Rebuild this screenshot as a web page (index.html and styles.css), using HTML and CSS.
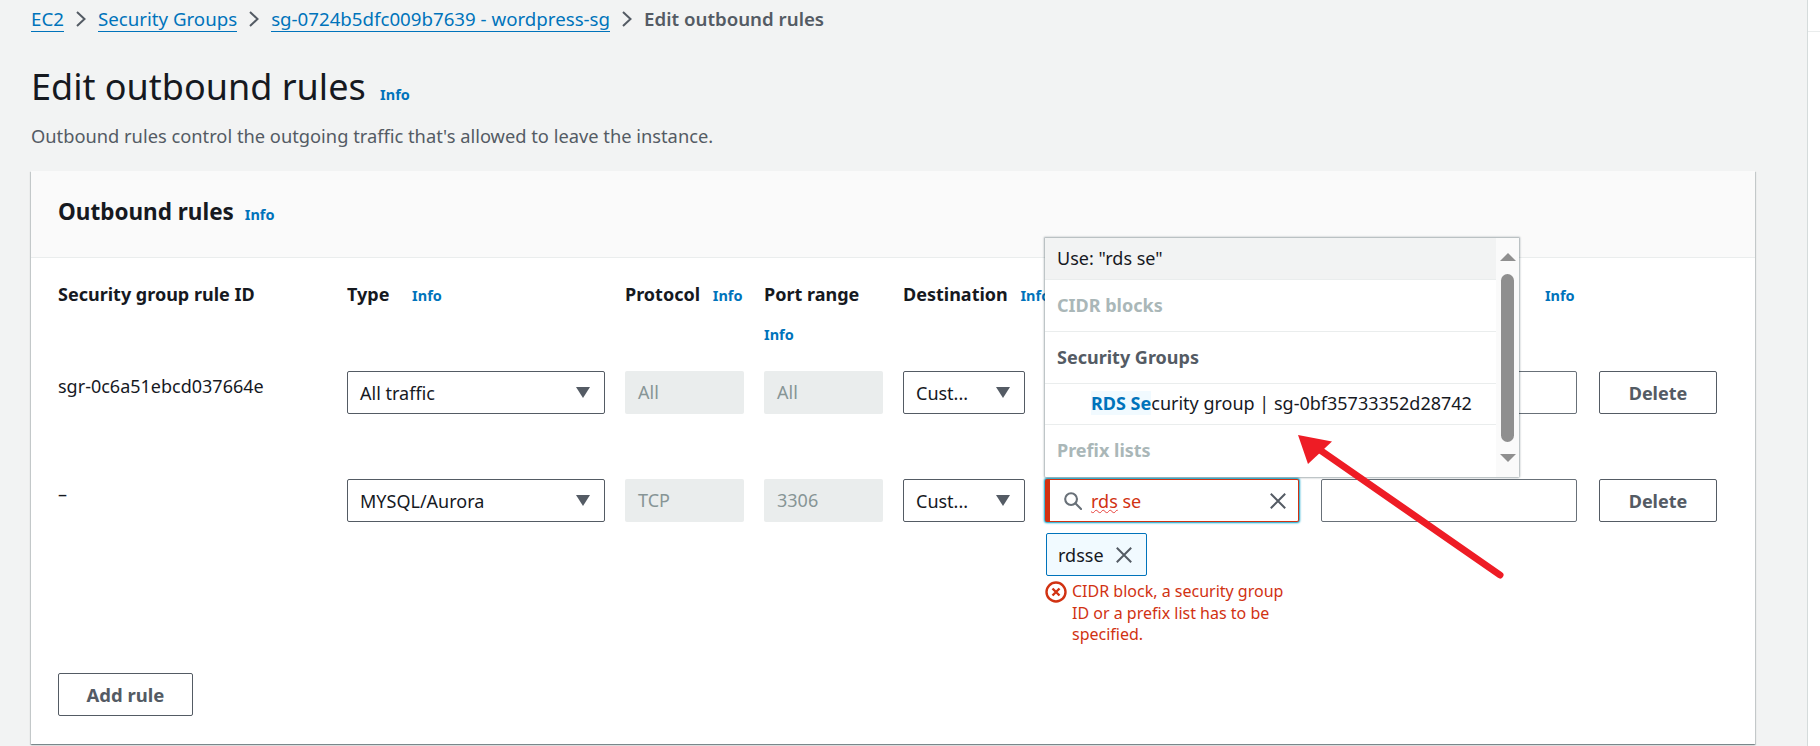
FILE: index.html
```html
<!DOCTYPE html>
<html lang="en">
<head>
<meta charset="utf-8">
<title>Edit outbound rules</title>
<link rel="stylesheet" href="styles.css">
</head>
<body>
<div class="shell">
  <main class="page">
    <nav class="crumbs">
      <a class="crumb-link" href="#">EC2</a>
      <svg class="crumb-sep" viewBox="0 0 16 16"><path d="M4 1l7.5 7L4 15" /></svg>
      <a class="crumb-link" href="#">Security Groups</a>
      <svg class="crumb-sep" viewBox="0 0 16 16"><path d="M4 1l7.5 7L4 15" /></svg>
      <a class="crumb-link" href="#">sg-0724b5dfc009b7639 - wordpress-sg</a>
      <svg class="crumb-sep" viewBox="0 0 16 16"><path d="M4 1l7.5 7L4 15" /></svg>
      <span class="crumb-current">Edit outbound rules</span>
    </nav>
    <header class="page-head">
      <h1 class="page-title">Edit outbound rules <a class="info info-title" href="#">Info</a></h1>
      <p class="page-desc">Outbound rules control the outgoing traffic that's allowed to leave the instance.</p>
    </header>
    <section class="card">
      <div class="card-head">
        <h2 class="card-title">Outbound rules <a class="info info-card" href="#">Info</a></h2>
      </div>
      <div class="card-body">
        <div class="rules">
          <div class="th">Security group rule ID</div>
          <div class="th">Type <a class="info info-wide" href="#">Info</a></div>
          <div class="th nowrap">Protocol <a class="info" href="#">Info</a></div>
          <div class="th">Port range <a class="info info-below" href="#">Info</a></div>
          <div class="th nowrap">Destination <a class="info" href="#">Info</a></div>
          <div class="th"></div>
          <div class="th nowrap">Description - optional <a class="info info-desc" href="#">Info</a></div>
          <div class="th"></div>

          <div class="cell-text">sgr-0c6a51ebcd037664e</div>
          <div class="select"><span class="select-text">All traffic</span><span class="caret"></span></div>
          <div class="field-off">All</div>
          <div class="field-off">All</div>
          <div class="select"><span class="select-text">Cust...</span><span class="caret"></span></div>
          <div class="field field-narrow"></div>
          <div class="field field-desc"></div>
          <button class="btn" type="button">Delete</button>

          <div class="cell-text">–</div>
          <div class="select"><span class="select-text">MYSQL/Aurora</span><span class="caret"></span></div>
          <div class="field-off">TCP</div>
          <div class="field-off">3306</div>
          <div class="select"><span class="select-text">Cust...</span><span class="caret"></span></div>
          <div class="combo">
            <div class="search">
              <svg class="search-icon" viewBox="0 0 20 20"><circle cx="8.5" cy="8.5" r="6.2"/><path d="M13 13l6 6"/></svg>
              <span class="search-text"><span class="spell">rds</span> se</span>
              <svg class="x-icon" viewBox="0 0 20 20"><path d="M2 2l16 16M18 2L2 18"/></svg>
            </div>
            <div class="menu">
              <div class="menu-list">
                <div class="menu-row menu-use">Use: "rds se"</div>
                <div class="menu-row menu-group menu-muted">CIDR blocks</div>
                <div class="menu-row menu-group">Security Groups</div>
                <div class="menu-row menu-item"><mark class="hit">RDS Se</mark>curity group | sg-0bf35733352d28742</div>
                <div class="menu-row menu-group menu-muted menu-last">Prefix lists</div>
              </div>
              <div class="scroll">
                <span class="scroll-up"></span>
                <span class="scroll-thumb"></span>
                <span class="scroll-down"></span>
              </div>
            </div>
            <div class="chip">rdsse <svg class="x-icon" viewBox="0 0 20 20"><path d="M2 2l16 16M18 2L2 18"/></svg></div>
            <div class="error">
              <svg class="error-icon" viewBox="0 0 22 22"><circle cx="11" cy="11" r="9.5"/><path d="M7.5 7.5l7 7M14.5 7.5l-7 7"/></svg>
              <span>CIDR block, a security group ID or a prefix list has to be specified.</span>
            </div>
          </div>
          <div class="field field-desc"></div>
          <button class="btn" type="button">Delete</button>
        </div>
        <button class="btn btn-add" type="button">Add rule</button>
      </div>
    </section>
    <svg class="callout" viewBox="0 0 1820 746"><path class="callout-shaft" d="M1500 575L1320 450"/><path class="callout-head" d="M1298 435L1332 441.500L1308 464Z"/></svg>
  </main>
  <aside class="side"><div class="side-top"></div></aside>
</div>
</body>
</html>
```

FILE: styles.css
```css
* { box-sizing: border-box; }
html, body { margin: 0; height: 746px; overflow: hidden; }
body { font-family: "Noto Sans", "Open Sans", sans-serif; font-size: 18px; line-height: 24px; color: #16191f; background: #f2f3f3; }
a { color: #0073bb; text-decoration: none; }

.shell { display: flex; height: 746px; }
.page { position: relative; flex: 1; min-width: 0; padding: 7px 52px 0 31px; }
.side { width: 13px; background: #fff; border-left: 1px solid #d5dbdb; }
.side-top { height: 32px; border-bottom: 1px solid #eaeded; }

.crumbs { display: flex; align-items: center; height: 24px; font-size: 18.700px; }
.crumb-link { color: #0073bb; border-bottom: 1px solid #0073bb; line-height: 24px; }
.crumb-sep { width: 16px; height: 16px; margin: 0 9px; fill: none; stroke: #545b64; stroke-width: 2; }
.crumb-current { color: #545b64; font-weight: 600; }

.page-head { margin-top: 34px; }
.page-title { margin: 0; font-size: 36px; line-height: 44px; font-weight: 400; color: #16191f; }
.page-desc { margin: 15px 0 0; color: #545b64; line-height: 24px; font-size: 18.300px; }

.info { font-size: 14.500px; font-weight: 700; line-height: 20px; margin-left: 8px; }
.info-title { margin-left: 5px; }
.info-card { margin-left: 5px; }
.info-wide { margin-left: 18px; }
.info-below { display: block; margin: 18px 0 0; }
.info-desc { margin-left: 26px; }

.card { margin-top: 23px; height: 573px; background: #fff; box-shadow: 0 1px 1px 0 rgba(0,28,36,.3), 1px 1px 1px 0 rgba(0,28,36,.15), -1px 1px 1px 0 rgba(0,28,36,.15); }
.card-head { height: 87px; padding: 27px 27px 0; background: #fafafa; border-bottom: 1px solid #eaeded; }
.card-title { margin: 0; font-size: 22.500px; line-height: 28px; font-weight: 700; }
.card-body { padding: 24px 27px 0; }

.rules { display: grid; grid-template-columns: 269px 258px 119px 119px 122px 256px 258px 114px; grid-template-rows: 89px 108px 194px; column-gap: 20px; align-items: start; }
.th { font-weight: 700; }
.nowrap { white-space: nowrap; }
.cell-text { padding-top: 3px; }

.select { display: flex; align-items: center; justify-content: space-between; height: 43px; padding: 0 14px 0 12px; background: #fff; border: 1px solid #545b64; border-radius: 2px; }
.select-text { white-space: nowrap; }
.caret { width: 0; height: 0; border-left: 7px solid transparent; border-right: 7px solid transparent; border-top: 11px solid #545b64; }
.field-off { height: 43px; padding: 9px 13px; background: #eaeded; color: #879596; border-radius: 2px; }
.field { height: 43px; background: #fff; border: 1px solid #687078; border-radius: 2px; }
.field-narrow { width: 254px; }
.field-desc { width: 256px; }

.btn { display: block; height: 43px; width: 118px; padding: 0; background: #fff; border: 1px solid #545b64; border-radius: 2px; color: #545b64; font: 700 18px/24px "Noto Sans", "Open Sans", sans-serif; }
.btn-add { width: 135px; font-size: 18.500px; }

.combo { position: relative; width: 254px; }
.search { display: flex; align-items: center; height: 43px; padding-left: 13px; background: #fff; border: 1px solid #d13212; border-left-width: 5px; border-radius: 2px; box-shadow: 0 0 2px 1px #00a1c9; color: #d13212; }
.search-icon { width: 19px; height: 19px; fill: none; stroke: #687078; stroke-width: 2.2; stroke-linecap: round; }
.search-text { flex: 1; margin-left: 9px; }
.spell { text-decoration: underline wavy #e8413c 1px; }
.x-icon { width: 18px; height: 18px; fill: none; stroke: #545b64; stroke-width: 2.2; }
.search .x-icon { margin-right: 11px; }

.menu { position: absolute; left: 0; top: -241px; display: flex; width: 474px; height: 239px; background: #fff; box-shadow: 0 0 2px 1px rgba(0,28,36,.35); border-radius: 0 0 1px 1px; }
.menu-list { flex: 1; min-width: 0; }
.menu-row { padding-left: 12px; border-bottom: 1px solid #eaeded; }
.menu-use { height: 42px; line-height: 40px; background: #f2f3f3; }
.menu-group { height: 52px; line-height: 50px; font-weight: 700; color: #545b64; }
.menu-muted { color: #aab7b8; }
.menu-last { border-bottom: 0; }
.menu-item { height: 41px; padding-left: 46px; line-height: 38px; white-space: nowrap; }
.hit { background: #f1faff; color: #0073bb; font-weight: 700; }
.scroll { display: flex; flex-direction: column; align-items: center; width: 23px; padding-top: 15px; background: #fafafa; }
.scroll-up { width: 0; height: 0; border-left: 8px solid transparent; border-right: 8px solid transparent; border-bottom: 8px solid #8f8f8f; }
.scroll-thumb { width: 13px; height: 168px; margin: 13px 0 12px; background: #8f8f8f; border-radius: 7px; }
.scroll-down { width: 0; height: 0; border-left: 8px solid transparent; border-right: 8px solid transparent; border-top: 8px solid #8f8f8f; }

.chip { display: flex; align-items: center; gap: 11px; width: 101px; height: 43px; margin: 11px 0 0 1px; padding-left: 11px; background: #f1faff; border: 1px solid #0073bb; border-radius: 2px; }
.error { display: flex; gap: 5px; margin-top: 5px; font-size: 16px; line-height: 21.500px; color: #d13212; width: 254px; }
.error-icon { flex: none; width: 22px; height: 22px; fill: none; stroke: #d13212; stroke-width: 2.4; }

.callout { position: absolute; left: 0; top: 0; width: 1820px; height: 746px; pointer-events: none; }
.callout-shaft { fill: none; stroke: #ee1c25; stroke-width: 7; stroke-linecap: round; }
.callout-head { fill: #ee1c25; }
```
